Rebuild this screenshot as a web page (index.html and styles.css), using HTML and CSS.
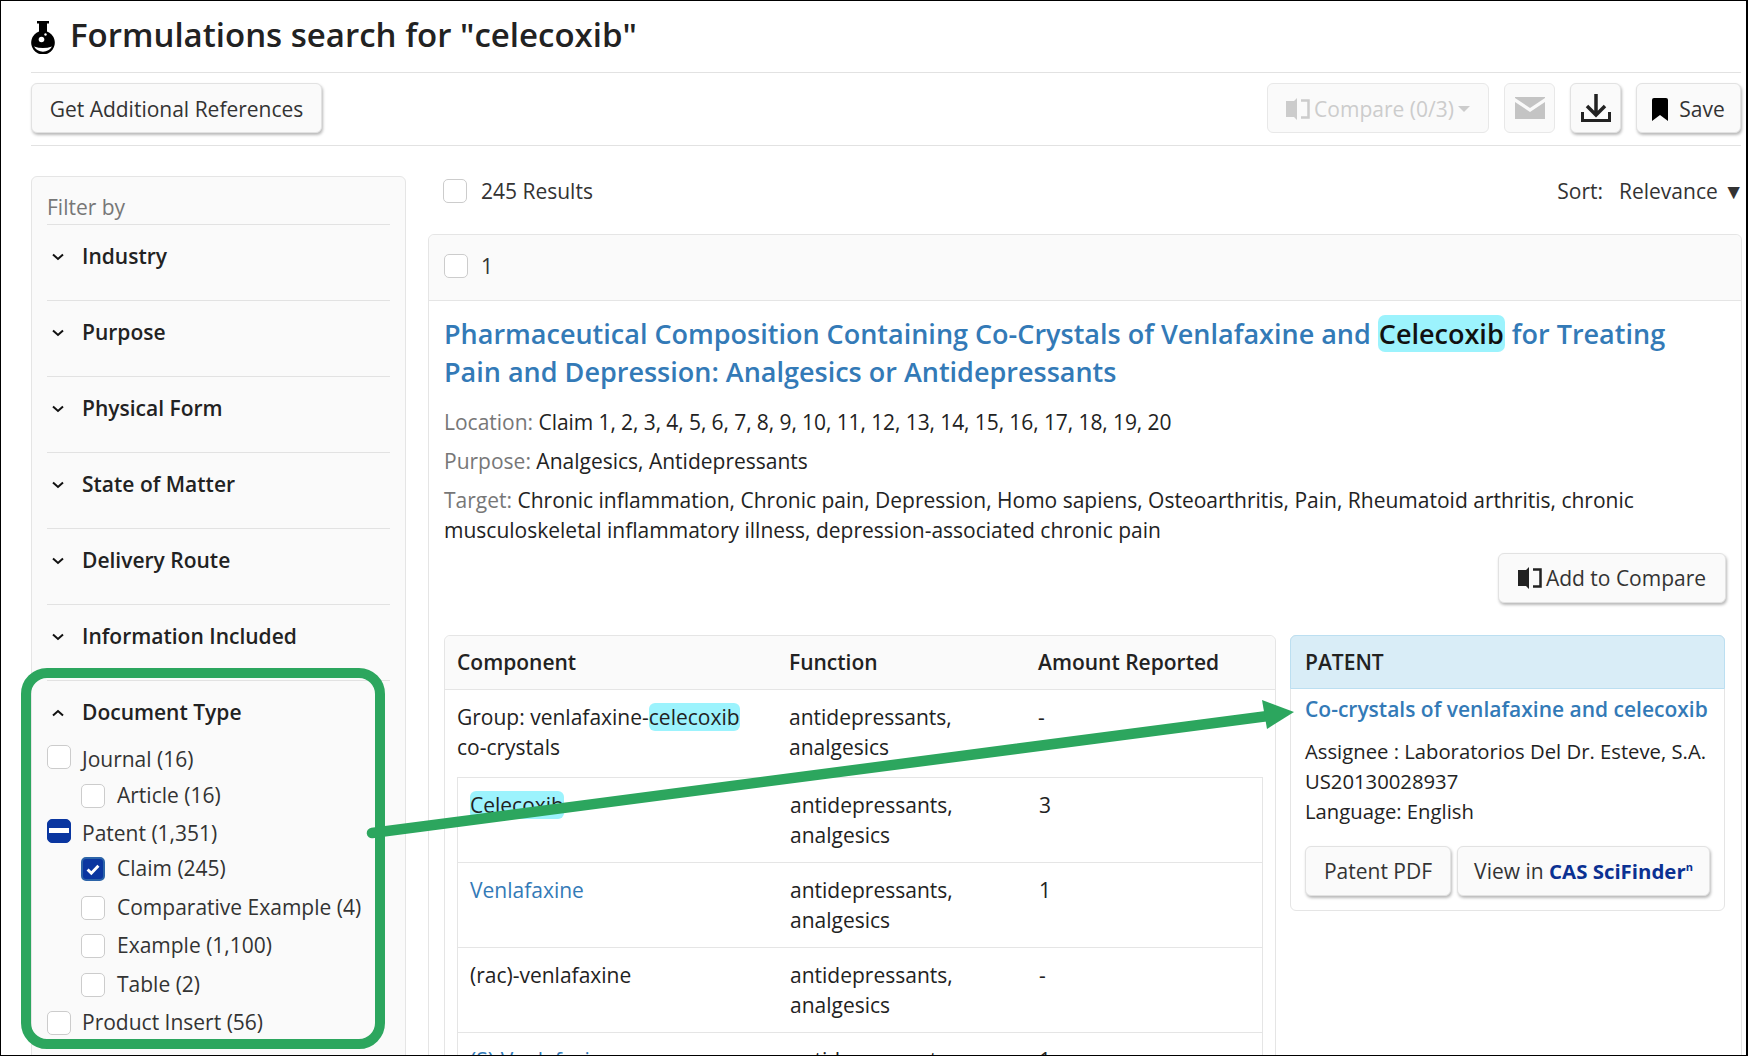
FILE: index.html
```html
<!DOCTYPE html>
<html lang="en">
<head>
<meta charset="utf-8">
<title>Formulations search</title>
<link rel="stylesheet" href="styles.css">
</head>
<body>
<div class="frame">
  <header class="title-row">
    <svg class="flask" viewBox="0 0 24 33"><path d="M6 0H18V2.500H16V10.500A11.800 11.800 0 1 1 8 10.500V2.500H6Z" fill="#000"/><circle cx="10.500" cy="18.500" r="2.800" fill="#fff"/><circle cx="14.500" cy="13.500" r="1.200" fill="#fff"/><path d="M3 25.500Q12 28.500 21 25.500Q18 30.500 12 30.800Q6 30.500 3 25.500Z" fill="#fff"/></svg>
    <h1 class="page-title">Formulations search for "celecoxib"</h1>
  </header>
  <div class="toolbar">
    <button class="btn wide">Get Additional References</button>
    <div class="tools">
      <button class="btn disabled compare"><svg class="i-compare" viewBox="0 0 24 22"><path d="M0 3H8L11 0V22L8 19H0Z" fill="currentColor"/><path d="M15 2.500H22.500V19.500H15" fill="none" stroke="currentColor" stroke-width="2.500"/></svg><span>Compare (0/3)</span><i class="caret"></i></button>
      <button class="btn disabled square"><svg class="i-mail" viewBox="0 0 30 22"><path d="M0 0H30V1L15 11L0 1Z M0 5L15 15L30 5V22H0Z" fill="#c4c4c4"/></svg></button>
      <button class="btn square"><svg class="i-down" viewBox="0 0 30 28"><path d="M15 0V20M6 12L15 21L24 12" fill="none" stroke="#222" stroke-width="3.500"/><path d="M1.500 18V26.500H28.500V18" fill="none" stroke="#222" stroke-width="3"/></svg></button>
      <button class="btn save"><svg class="i-mark" viewBox="0 0 16 23"><path d="M0 2Q0 0 2 0H14Q16 0 16 2V23L8 17L0 23Z" fill="#000"/></svg>Save</button>
    </div>
  </div>
  <div class="columns">
    <aside class="sidebar">
      <div class="filter-by">Filter by</div>
      <div class="section"><svg class="chev" viewBox="0 0 12 8"><path d="M1 1.500L6 6L11 1.500" /></svg>Industry</div>
      <div class="section"><svg class="chev" viewBox="0 0 12 8"><path d="M1 1.500L6 6L11 1.500" /></svg>Purpose</div>
      <div class="section"><svg class="chev" viewBox="0 0 12 8"><path d="M1 1.500L6 6L11 1.500" /></svg>Physical Form</div>
      <div class="section"><svg class="chev" viewBox="0 0 12 8"><path d="M1 1.500L6 6L11 1.500" /></svg>State of Matter</div>
      <div class="section"><svg class="chev" viewBox="0 0 12 8"><path d="M1 1.500L6 6L11 1.500" /></svg>Delivery Route</div>
      <div class="section"><svg class="chev" viewBox="0 0 12 8"><path d="M1 1.500L6 6L11 1.500" /></svg>Information Included</div>
      <div class="section open"><svg class="chev" viewBox="0 0 12 8"><path d="M1 6.500L6 2L11 6.500" /></svg>Document Type</div>
      <ul class="doc-list">
        <li class="parent first"><span class="cb"></span><span class="lbl">Journal (16)</span></li>
        <li class="child"><span class="cb"></span><span class="lbl">Article (16)</span></li>
        <li class="parent"><span class="cb mixed"><i></i></span><span class="lbl">Patent (1,351)</span></li>
        <li class="child"><span class="cb checked"><svg viewBox="0 0 24 24"><path d="M5.500 12.500L10 17L18.500 8" fill="none" stroke="#fff" stroke-width="3.500"/></svg></span><span class="lbl">Claim (245)</span></li>
        <li class="child"><span class="cb"></span><span class="lbl">Comparative Example (4)</span></li>
        <li class="child"><span class="cb"></span><span class="lbl">Example (1,100)</span></li>
        <li class="child"><span class="cb"></span><span class="lbl">Table (2)</span></li>
        <li class="parent last"><span class="cb"></span><span class="lbl">Product Insert (56)</span></li>
      </ul>
    </aside>
    <main class="results">
      <div class="results-bar">
        <div class="count"><span class="cb"></span>245 Results</div>
        <div class="sort"><span>Sort:</span><span>Relevance ▼</span></div>
      </div>
      <article class="card">
        <div class="card-head"><span class="cb"></span>1</div>
        <div class="card-body">
          <h2 class="rec-title">Pharmaceutical Composition Containing Co-Crystals of Venlafaxine and <mark class="hit-big">Celecoxib</mark> for Treating Pain and Depression: Analgesics or Antidepressants</h2>
          <p class="meta"><span class="key">Location:</span> <span class="claims">Claim 1, 2, 3, 4, 5, 6, 7, 8, 9, 10, 11, 12, 13, 14, 15, 16, 17, 18, 19, 20</span></p>
          <p class="meta"><span class="key">Purpose:</span> Analgesics, Antidepressants</p>
          <p class="meta"><span class="key">Target:</span> Chronic inflammation, Chronic pain, Depression, Homo sapiens, Osteoarthritis, Pain, Rheumatoid arthritis, chronic musculoskeletal inflammatory illness, depression-associated chronic pain</p>
          <div class="add-row"><button class="btn add"><svg class="i-compare" viewBox="0 0 24 22"><path d="M0 3H8L11 0V22L8 19H0Z" fill="currentColor"/><path d="M15 2.500H22.500V19.500H15" fill="none" stroke="currentColor" stroke-width="2.500"/></svg>Add to Compare</button></div>
          <div class="split">
            <section class="comp">
              <div class="comp-head"><span>Component</span><span>Function</span><span>Amount Reported</span></div>
              <div class="comp-group"><span>Group: venlafaxine-<mark class="hit">celecoxib</mark><br>co-crystals</span><span>antidepressants, analgesics</span><span>-</span></div>
              <div class="inner">
                <div class="inner-row"><span><mark class="hit">Celecoxib</mark></span><span>antidepressants, analgesics</span><span>3</span></div>
                <div class="inner-row"><a class="link">Venlafaxine</a><span>antidepressants, analgesics</span><span>1</span></div>
                <div class="inner-row"><span>(rac)-venlafaxine</span><span>antidepressants, analgesics</span><span>-</span></div>
                <div class="inner-row"><a class="link">(S)-Venlafaxine</a><span>antidepressants, analgesics</span><span>1</span></div>
              </div>
            </section>
            <section class="patent">
              <div class="patent-head">PATENT</div>
              <div class="patent-body">
                <a class="patent-link">Co-crystals of venlafaxine and celecoxib</a>
                <div class="patent-info">Assignee : Laboratorios Del Dr. Esteve, S.A.<br>US20130028937<br>Language: English</div>
                <div class="patent-btns"><button class="btn pdf">Patent PDF</button><button class="btn view">View in <b class="cas">CAS SciFinder<sup>n</sup></b></button></div>
              </div>
            </section>
          </div>
        </div>
      </article>
    </main>
  </div>
  <div class="callout"></div>
  <svg class="arrow" viewBox="0 0 1748 1056"><path d="M372 833L1268 716" stroke="#2ca65e" stroke-width="10.500" stroke-linecap="round" fill="none"/><path d="M1262 700L1294 712L1267 729Z" fill="#2ca65e"/></svg>
</div>
</body>
</html>
```
FILE: styles.css
```css
* { box-sizing: border-box; }
html, body { margin: 0; padding: 0; }
body { font-family: "Open Sans", "Noto Sans", sans-serif; font-size: 21px; line-height: 30px; color: #222; background: #fff; }
.frame { position: relative; width: 1748px; height: 1056px; overflow: hidden; border: 1px solid #000; border-right-width: 2px; padding: 0 5px 0 30px; }
.title-row { height: 72px; display: flex; align-items: flex-start; padding-top: 20px; border-bottom: 1px solid #e2e2e2; }
.flask { width: 24px; height: 33px; flex: none; margin-right: 15px; }
.page-title { margin: 0; font-size: 33px; line-height: 28px; font-weight: 600; color: #222; padding-top: 0; }
.toolbar { height: 73px; display: flex; justify-content: space-between; align-items: flex-start; padding-top: 10px; border-bottom: 1px solid #e2e2e2; }
.tools { display: flex; gap: 15px; }
.btn { height: 50px; font: inherit; font-size: 21px; color: #333; background: #fafafa; border: 1px solid #e2e2e2; border-radius: 6px; box-shadow: 1px 2px 3px rgba(0,0,0,.28); padding: 0 16px; display: inline-flex; align-items: center; justify-content: center; white-space: nowrap; }
.wide { width: 291px; padding-top: 2px; }
.btn.disabled { box-shadow: none; color: #ccc; border-color: #e8e8e8; }
.compare { width: 222px; padding: 2px 0 0; }
.square { width: 51px; padding: 0; }
.save { width: 105px; padding: 2px 0 0; }
.i-compare { width: 24px; height: 22px; margin-right: 4px; flex: none; }
.caret { width: 0; height: 0; margin-left: 4px; border-left: 6px solid transparent; border-right: 6px solid transparent; border-top: 6px solid #ccc; }
.i-mail { width: 30px; height: 22px; }
.i-down { width: 30px; height: 28px; }
.i-mark { width: 16px; height: 23px; margin-right: 11px; }
.columns { display: flex; gap: 22px; margin-top: 30px; align-items: flex-start; }
.sidebar { width: 375px; flex: none; height: 900px; background: #fafafa; border: 1px solid #e5e5e5; border-radius: 6px; padding: 0 15px; }
.filter-by { height: 48px; padding-top: 15px; color: #777; border-bottom: 1px solid #e2e2e2; }
.section { height: 76px; padding-top: 16px; display: flex; align-items: flex-start; border-bottom: 1px solid #e2e2e2; font-weight: 600; color: #222; line-height: 30px; }
.section.open { border-bottom: 0; height: 64px; }
.chev { width: 12px; height: 8px; margin: 12px 18px 0 5px; flex: none; fill: none; stroke: #111; stroke-width: 2; }
.doc-list { list-style: none; margin: 0; padding: 0; }
.doc-list li { display: flex; align-items: center; height: 24px; }
.doc-list .parent { margin-top: 11px; }
.doc-list .parent.first { margin-top: 0; }
.doc-list .parent.last { margin-top: 14.500px; }
.doc-list .child { margin-top: 14.500px; padding-left: 34px; }
.doc-list .parent .lbl { margin-left: 11px; padding-top: 4px; }
.doc-list .parent.last .lbl { padding-top: 0; padding-bottom: 3px; }
.doc-list .child .lbl { margin-left: 12px; padding-bottom: 2px; }
.lbl { color: #333; white-space: nowrap; }
.cb { display: inline-block; flex: none; width: 24px; height: 24px; background: #fff; border: 1px solid #ccc; border-radius: 5px; }
.cb.mixed { background: #0a36a0; border-color: #0a36a0; display: flex; align-items: center; }
.cb.mixed i { display: block; width: 100%; height: 5px; margin: 0 1px; background: #fff; }
.cb.checked { background: #0a36a0; border: 2px solid #2c64a8; padding: 0; }
.cb.checked svg { display: block; width: 20px; height: 20px; }
.results { width: 1314px; flex: none; }
.results-bar { height: 58px; display: flex; justify-content: space-between; align-items: flex-start; }
.count { display: flex; align-items: center; height: 30px; padding-left: 15px; color: #333; }
.count .cb { margin-right: 14px; }
.sort { display: flex; gap: 16px; height: 30px; margin-right: -2px; color: #333; }
.card { border: 1px solid #e5e5e5; border-radius: 6px; height: 900px; }
.card-head { height: 66px; background: #fafafa; border-bottom: 1px solid #e5e5e5; border-radius: 6px 6px 0 0; padding: 0 0 3px 15px; display: flex; align-items: center; color: #333; }
.card-head .cb { margin-right: 13px; }
.card-body { padding: 14px 15px 0; }
.rec-title { margin: 0 0 17px; font-size: 27px; line-height: 37.500px; font-weight: 600; color: #337ab7; padding-right: 40px; }
.hit-big { background: #9cf3fd; color: #111; border-radius: 7px; padding: 0 1px; font-weight: 600; }
.hit { background: #9cf3fd; color: #222; border-radius: 6px; padding: 0; }
.meta { margin: 0 0 9px; color: #222; padding-right: 60px; }
.key { color: #777; }
.claims { letter-spacing: -0.090px; }
.add-row { display: flex; justify-content: flex-end; margin-top: -1px; }
.add { width: 228px; padding: 0; }
.add .i-compare { color: #222; }
.split { margin-top: 32px; display: flex; gap: 14px; align-items: flex-start; }
.comp { width: 832px; flex: none; height: 520px; border: 1px solid #e5e5e5; border-radius: 6px; }
.comp-head { height: 54px; background: #fafafa; border-bottom: 1px solid #e5e5e5; border-radius: 6px 6px 0 0; padding: 11px 0 0 12px; display: grid; grid-template-columns: 332px 249px 1fr; font-weight: 600; color: #222; }
.comp-group { display: grid; grid-template-columns: 332px 249px 1fr; padding: 12px 0 15px 12px; }
.comp-group span { padding-right: 20px; }
.inner { margin-left: 12px; width: 806px; border: 1px solid #e5e5e5; border-bottom: 0; }
.inner-row { display: grid; grid-template-columns: 320px 249px 1fr; padding: 12px 0 12px 12px; border-bottom: 1px solid #e5e5e5; height: 85px; }
.inner-row span { padding-right: 60px; }
.link { color: #337ab7; }
.patent { width: 435px; flex: none; border: 1px solid #e5e5e5; border-radius: 6px; }
.patent-head { height: 54px; background: #d9edf7; border: 1px solid #bcdff1; margin: -1px -1px 0; border-radius: 6px 6px 0 0; padding: 11px 0 0 14px; font-weight: 600; color: #222; }
.patent-body { padding: 5px 0 14px 14px; }
.patent-link { display: block; color: #337ab7; font-weight: 600; white-space: nowrap; }
.patent-info { margin-top: 12px; font-size: 20.250px; }
.patent-btns { margin-top: 20px; display: flex; gap: 6px; }
.pdf { width: 146px; padding: 0; }
.view { width: 253px; padding: 0; display: inline-block; }
.cas { color: #0b3192; font-weight: 700; font-size: 20.400px; }
.cas sup { font-size: 11px; line-height: 0; font-weight: 700; }
.callout { position: absolute; left: 20px; top: 667px; width: 364px; height: 381px; border: 10px solid #2ca65e; border-radius: 26px; pointer-events: none; }
.arrow { position: absolute; left: -1px; top: -1px; width: 1748px; height: 1056px; pointer-events: none; }
```
